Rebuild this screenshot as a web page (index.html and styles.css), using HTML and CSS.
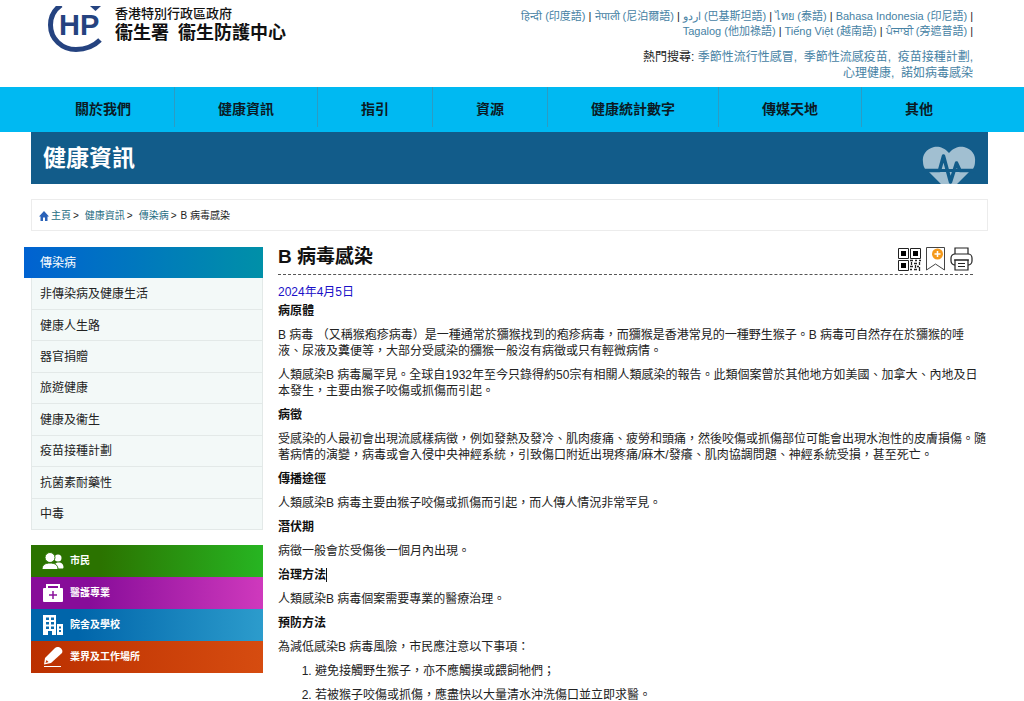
FILE: index.html
```html
<!DOCTYPE html>
<html lang="zh-HK">
<head>
<meta charset="utf-8">
<title>B 病毒感染</title>
<link rel="stylesheet" href="styles.css">
</head>
<body>
<header class="header">
  <a class="brand" href="#">
    <svg class="brand-mark" viewBox="0 0 56 46" aria-hidden="true">
      <path d="M14 -1C7 4 3.500 11 3.500 19C3.500 33 15 43.500 29 43.500C39 43.500 47 40 53 34" fill="none" stroke="#254380" stroke-width="5"/>
      <path d="M43 0H54L48.500 5Z" fill="#254380"/>
      <text class="brand-letters" x="12" y="29">HP</text>
    </svg>
    <span class="brand-text">
      <span class="brand-gov">香港特別行政區政府</span>
      <span class="brand-dept"><span>衞生署</span><span>衞生防護中心</span></span>
    </span>
  </a>
  <div class="header-links">
    <div class="languages">
      <div><a href="#">हिन्दी (印度語)</a> | <a href="#">नेपाली (尼泊爾語)</a> | <a href="#"><bdi>اردو</bdi> (巴基斯坦語)</a> | <a href="#">ไทย (泰語)</a> | <a href="#">Bahasa Indonesia (印尼語)</a> |</div>
      <div><a href="#">Tagalog (他加祿語)</a> | <a href="#">Tiếng Việt (越南語)</a> | <a href="#">ਪੰਜਾਬੀ (旁遮普語)</a> |</div>
    </div>
    <div class="searches">
      <div>熱門搜尋: <a href="#">季節性流行性感冒,</a>&nbsp; <a href="#">季節性流感疫苗,</a>&nbsp; <a href="#">疫苗接種計劃,</a></div>
      <div><a href="#">心理健康,</a>&nbsp; <a href="#">諾如病毒感染</a></div>
    </div>
  </div>
</header>
<nav class="nav">
  <a href="#">關於我們</a>
  <a href="#">健康資訊</a>
  <a href="#">指引</a>
  <a href="#">資源</a>
  <a href="#">健康統計數字</a>
  <a href="#">傳媒天地</a>
  <a href="#">其他</a>
</nav>
<div class="page">
  <div class="banner">
    <span>健康資訊</span>
    <svg class="banner-heart" viewBox="0 0 54 38" aria-hidden="true">
      <path d="M27 7C22 1 16 0 12 1C4 3 0 9 1 16C1 19 2 21 3 23H51C52 21 53 19 53 16C54 9 50 3 42 1C38 0 32 1 27 7ZM7 26H47L35 38H19Z" fill="#a1bfd1"/>
      <path d="M0 24.500H17.500L21.500 10L28.500 36L34.500 17L38 24.500H54" fill="none" stroke="#125c8a" stroke-width="3.500" stroke-linejoin="round"/>
    </svg>
  </div>
  <nav class="crumbs">
    <svg class="crumb-home" viewBox="0 0 10 10" aria-hidden="true"><path d="M5 0L10 5.500H8.500V10H6V6.500H4V10H1.500V5.500H0Z" fill="#2a62b8"/></svg>
    <a href="#">主頁</a><span>&gt;</span>
    <a class="crumb-next" href="#">健康資訊</a><span>&gt;</span>
    <a class="crumb-next" href="#">傳染病</a><span>&gt;</span>
    <span class="crumb-here">B 病毒感染</span>
  </nav>
  <div class="columns">
    <aside class="side">
      <ul class="topics">
        <li class="active"><a href="#">傳染病</a></li>
        <li><a href="#">非傳染病及健康生活</a></li>
        <li><a href="#">健康人生路</a></li>
        <li><a href="#">器官捐贈</a></li>
        <li><a href="#">旅遊健康</a></li>
        <li><a href="#">健康及衞生</a></li>
        <li><a href="#">疫苗接種計劃</a></li>
        <li><a href="#">抗菌素耐藥性</a></li>
        <li><a href="#">中毒</a></li>
      </ul>
      <div class="audiences">
        <a class="public" href="#">
          <svg viewBox="0 0 22 22" aria-hidden="true"><g fill="#fff"><circle cx="16" cy="8" r="3.500"/><path d="M12 18.500C12 14 14 12.500 16.500 12.500C20 12.500 21.500 14.500 21.500 17.500L21 18.500H12Z"/></g><g fill="#fff" stroke="#2b7900"><circle cx="8" cy="7.500" r="5"/><path d="M0 19.500C0 15 3 13 8 13C13 13 16 15 16 19.500Z"/></g></svg>市民</a>
        <a class="medical" href="#">
          <svg viewBox="0 0 22 22" aria-hidden="true"><path d="M5 7V3H17V7" fill="none" stroke="#fff" stroke-width="2"/><rect x="1" y="6" width="20" height="14" rx="1" fill="#fff"/><path d="M11 9V17M7 13H15" stroke="#8b129c" stroke-width="1.500"/></svg>醫護專業</a>
        <a class="schools" href="#">
          <svg viewBox="0 0 22 22" aria-hidden="true"><path d="M1 1H14V21H10V17H6V21H1Z" fill="#fff"/><path d="M4 3.500H7V6H4ZM9 3.500H12V6H9ZM4 8H7V10.500H4ZM9 8H12V10.500H9ZM4 12.500H7V15H4ZM9 12.500H12V15H9Z" fill="#0a6cae"/><path d="M15 10H21V21H15Z" fill="#fff"/><path d="M17 12.500H19V14.500H17ZM17 16H19V18H17Z" fill="#0a6cae"/></svg>院舍及學校</a>
        <a class="work" href="#">
          <svg viewBox="0 0 22 22" aria-hidden="true"><path d="M2 18.500L3 12L13 2C16 -1 22 3 20 7L9 17Z" fill="#fff"/><path d="M3.500 17L4.500 14L6.500 16Z" fill="#c03806"/><path d="M2 20.500H19" stroke="#fff"/></svg>業界及工作場所</a>
      </div>
    </aside>
    <main class="article">
      <div class="article-head">
        <h1>B 病毒感染</h1>
        <div class="tools">
          <button type="button" aria-label="QR"><svg viewBox="0 0 24 24" aria-hidden="true"><g fill="none" stroke="#222"><path d="M1.500 1.500H11.500V11.500H1.500ZM13.500 1.500H23.500V11.500H13.500ZM1.500 13.500H11.500V23.500H1.500Z"/><path d="M13 13.500H16M18 13.500H20M22 13.500H24M14.500 15V18M17 16.500H20M22.500 15V18M13 19.500H16M18.500 18V21M20 19.500H22M13 22.500H15M17 22.500H20M22.500 20V24" stroke-width="1.300"/></g><path d="M4 4H9V9H4ZM16 4H21V9H16ZM4 16H9V21H4Z"/></svg></button>
          <button type="button" aria-label="Bookmark"><svg viewBox="0 0 24 24" aria-hidden="true"><path d="M3.500 .5H21.500V23L12.500 17L3.500 23Z" fill="#fff" stroke="#444"/><circle cx="14.500" cy="7" r="5.500" fill="#f59a1b"/><path d="M14.500 4V10M11.500 7H17.500" stroke="#fff" stroke-width="1.500"/></svg></button>
          <button type="button" aria-label="Print"><svg viewBox="0 0 24 24" aria-hidden="true"><g fill="#fff" stroke="#222" stroke-width="1.200"><path d="M6 8V1H19V8"/><rect x="2" y="7" width="21" height="11" rx="4"/><path d="M6 13H19V23H6Z"/><path d="M5 13H20M9 16.500H16M9 19.500H16"/></g></svg></button>
        </div>
      </div>
      <div class="date">2024年4月5日</div>
      <h2 class="first">病原體</h2>
      <p>B 病毒 （又稱猴疱疹病毒）是一種通常於獼猴找到的疱疹病毒，而獼猴是香港常見的一種野生猴子。B 病毒可自然存在於獼猴的唾<br>液、尿液及糞便等，大部分受感染的獼猴一般沒有病徵或只有輕微病情。</p>
      <p>人類感染B 病毒屬罕見。全球自1932年至今只錄得約50宗有相關人類感染的報告。此類個案曾於其他地方如美國、加拿大、內地及日<br>本發生，主要由猴子咬傷或抓傷而引起。</p>
      <h2>病徵</h2>
      <p>受感染的人最初會出現流感樣病徵，例如發熱及發冷、肌肉痠痛、疲勞和頭痛，然後咬傷或抓傷部位可能會出現水泡性的皮膚損傷。隨<br>著病情的演變，病毒或會入侵中央神經系統，引致傷口附近出現疼痛/麻木/發癢、肌肉協調問題、神經系統受損，甚至死亡。</p>
      <h2>傳播途徑</h2>
      <p>人類感染B 病毒主要由猴子咬傷或抓傷而引起，而人傳人情況非常罕見。</p>
      <h2>潛伏期</h2>
      <p>病徵一般會於受傷後一個月內出現。</p>
      <h2><span class="caret">治理方法</span></h2>
      <p>人類感染B 病毒個案需要專業的醫療治理。</p>
      <h2>預防方法</h2>
      <p>為減低感染B 病毒風險，市民應注意以下事項：</p>
      <ol>
        <li>避免接觸野生猴子，亦不應觸摸或餵飼牠們；</li>
        <li>若被猴子咬傷或抓傷，應盡快以大量清水沖洗傷口並立即求醫。</li>
      </ol>
    </main>
  </div>
</div>
</body>
</html>
```
FILE: styles.css
```css
* { box-sizing: border-box; }

body {
  margin: 0;
  background: #fff;
  color: #222;
  font-family: "Liberation Sans", "Noto Sans CJK TC", sans-serif;
  font-size: 12px;
  line-height: 16px;
  white-space: nowrap;
  overflow-x: hidden;
}

a { color: inherit; text-decoration: none; }

.header {
  display: flex;
  justify-content: space-between;
  height: 87px;
  padding: 6px 51px 0 47px;
}

.brand { display: flex; gap: 12px; color: #111; font-weight: 700; }
.brand-mark { width: 56px; height: 46px; }
.brand-letters { font: 700 29px "Liberation Sans", sans-serif; fill: #254380; }
.brand-text { display: flex; flex-direction: column; }
.brand-gov { font-size: 13px; font-weight: 500; line-height: 16px; }
.brand-dept { display: flex; gap: 9px; font-size: 18px; line-height: 22px; }

.header-links { text-align: right; }
.header-links a { color: #4682a4; }
.languages { padding-top: 3px; font-size: 11px; line-height: 15px; }
.searches { padding-top: 10px; font-size: 12px; line-height: 16px; }

.nav {
  display: flex;
  padding: 0 36px 0 32px;
  background: #00b9f2;
  height: 45px;
}
.nav a {
  height: 40px;
  padding: 0 43px;
  border-right: 1px solid #2b9cc4;
  color: #0b1a24;
  font-size: 14px;
  font-weight: 700;
  line-height: 44px;
}
.nav a:last-child { border-right: 0; }

.page { padding: 0 36px 0 31px; }

.banner {
  display: flex;
  align-items: flex-end;
  justify-content: space-between;
  height: 52px;
  padding: 0 12px;
  background: #125c8a;
  color: #fff;
  font-size: 23px;
  font-weight: 700;
  line-height: 52px;
}
.banner-heart { width: 54px; height: 38px; }

.crumbs {
  display: flex;
  align-items: center;
  gap: 2px;
  height: 32px;
  margin-top: 15px;
  padding: 2px 7px 0;
  border: 1px solid #ececec;
  font-size: 10px;
}
.crumbs a { color: #1f6d83; }
.crumbs .crumb-next { margin-left: 4px; }
.crumb-here { margin-left: 2px; }
.crumb-home { width: 10px; height: 10px; }

.columns {
  display: grid;
  grid-template-columns: 232px minmax(0, 1fr);
  gap: 15px;
  padding: 16px 15px 0 0;
}

.topics {
  display: grid;
  grid-auto-rows: 1fr;
  min-height: 283px;
  margin: 0;
  padding: 0;
  list-style: none;
}
.topics li {
  display: flex;
  align-items: center;
  padding: 1px 8px 0;
  border: 1px solid #e3e9e8;
  border-top: 0;
  background: #f3f9f8;
}
.topics .active {
  margin-left: -7px;
  padding: 0 16px;
  border: 0;
  background: linear-gradient(90deg, #0062d1, #0090a8);
  color: #fff;
}

.audiences { margin-top: 15px; color: #fff; font-size: 10px; font-weight: 700; }
.audiences a { display: flex; align-items: center; gap: 6px; height: 32px; padding-left: 11px; }
.audiences svg { width: 22px; height: 22px; }
.public { background: linear-gradient(90deg, #2b7300 30%, #27b522); }
.medical { background: linear-gradient(90deg, #870c99 25%, #cf39bd); }
.schools { background: linear-gradient(90deg, #0065aa 20%, #2c9ccc); }
.work { background: linear-gradient(90deg, #bb3000, #d64c10); }

.article-head {
  display: flex;
  align-items: flex-start;
  justify-content: space-between;
  height: 28px;
  border-bottom: 1px dashed #555;
}
.article h1 { margin: 0; color: #111; font-size: 19px; line-height: 20px; }
.tools { display: flex; gap: 2px; }
.tools button { display: block; padding: 0; border: 0; background: none; }
.tools svg { display: block; width: 24px; height: 24px; }

.date { margin-top: 9px; color: #1a10c8; }
.article h2 { margin: 8px 0; color: #111; font-size: 12px; line-height: 16px; }
.article h2.first { margin-top: 3px; }
.article p { margin: 8px 0; }
.article ol { margin: 8px 0; padding-left: 37px; }
.article li { margin-bottom: 8px; }
.caret { border-right: 1px solid #111; }
```
